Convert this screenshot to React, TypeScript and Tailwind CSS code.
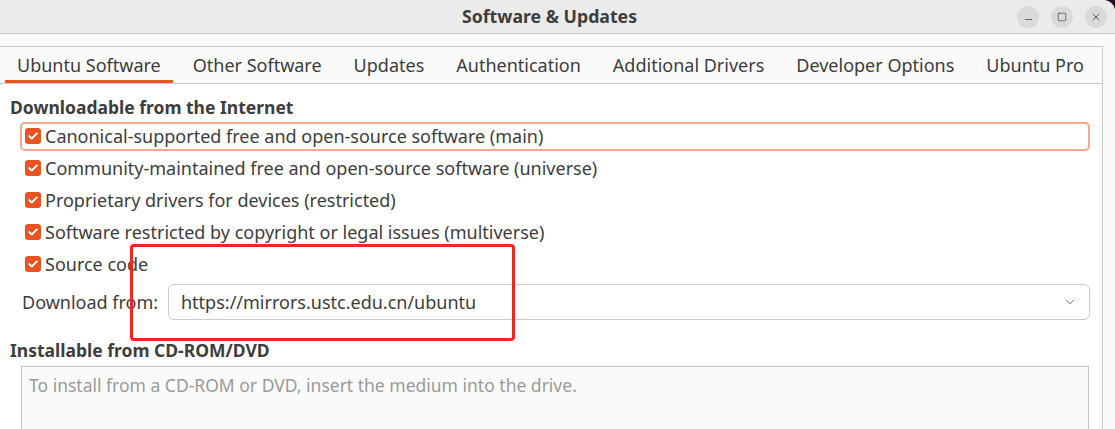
import { ChevronDown, Minus, Square, X } from "lucide-react"

const tabs = [
  "Ubuntu Software",
  "Other Software",
  "Updates",
  "Authentication",
  "Additional Drivers",
  "Developer Options",
  "Ubuntu Pro",
]

const sources = [
  "Canonical-supported free and open-source software (main)",
  "Community-maintained free and open-source software (universe)",
  "Proprietary drivers for devices (restricted)",
  "Software restricted by copyright or legal issues (multiverse)",
  "Source code",
]

function CheckBox() {
  return (
    <span className="w-[16px] h-[16px] rounded-[3px] bg-[#e95420] flex items-center justify-center flex-shrink-0">
      <svg width="10" height="8" viewBox="0 0 10 8" fill="none">
        <path d="M1.2 4 L3.8 6.5 L8.8 1.4" stroke="white" strokeWidth="1.8" strokeLinecap="round" strokeLinejoin="round" />
      </svg>
    </span>
  )
}

export default function App() {
  return (
    <div className="w-[1115px] h-[429px] bg-[#300a24] overflow-hidden">
      <div className="relative h-full bg-[#fafafa] rounded-tr-[12px] overflow-hidden font-['Noto_Sans',sans-serif] text-[#3d3d3d]">
        {/* header bar */}
        <div className="h-[34px] bg-[#ebebeb] border-b border-[#c8c8c8] grid grid-cols-[1fr_auto_1fr] items-center">
          <div />
          <h1 className="text-[17.7px] font-bold text-[#3d3d3d] pr-[16px]">Software &amp; Updates</h1>
          <div className="flex justify-end gap-[12px] pr-[8px]">
            <span className="w-[22px] h-[22px] rounded-full bg-[#dadada] flex items-center justify-center">
              <Minus className="w-[11px] h-[11px] mt-[5px]" strokeWidth={1.6} />
            </span>
            <span className="w-[22px] h-[22px] rounded-full bg-[#dadada] flex items-center justify-center">
              <Square className="w-[10px] h-[10px]" strokeWidth={1.6} />
            </span>
            <span className="w-[22px] h-[22px] rounded-full bg-[#dadada] flex items-center justify-center">
              <X className="w-[12px] h-[12px]" strokeWidth={1.6} />
            </span>
          </div>
        </div>

        {/* notebook */}
        <div className="pt-[12px] pr-[12px]">
          <div className="border-t border-r border-[#cdcdcd]">
            <div className="h-[37px] flex gap-2 pl-[5px] border-b border-[#cdcdcd] bg-[#fafafa]">
              {tabs.map((t, i) => (
                <div
                  key={t}
                  className={
                    i === 0
                      ? "px-[12px] flex items-center text-[18px] border-b-[3px] border-[#e95420] pt-[3px] whitespace-nowrap"
                      : "px-[12px] flex items-center text-[18px] whitespace-nowrap"
                  }
                >
                  {t}
                </div>
              ))}
            </div>

            <div className="bg-white h-[400px]">
              <h2 className="pt-[12px] pl-[10px] text-[17.5px] font-bold leading-[22px]">Downloadable from the Internet</h2>

              <div className="mt-[2px]">
                {sources.map((s, i) => (
                  <div key={s} className="h-[32px] flex items-center">
                    <div
                      className={
                        i === 0
                          ? "ml-[20px] mr-[12px] flex-1 h-[29px] border-2 border-[#f4a88c] rounded-[5px] flex items-center gap-[4px] pl-[3px]"
                          : "ml-[20px] mr-[12px] flex-1 h-[29px] border-2 border-transparent flex items-center gap-[4px] pl-[3px]"
                      }
                    >
                      <CheckBox />
                      <span className="text-[18px] whitespace-nowrap">{s}</span>
                    </div>
                  </div>
                ))}
              </div>

              <div className="mt-[4px] flex items-center pl-[22px] pr-[12px]">
                <span className="text-[18px] w-[146px] whitespace-nowrap">Download from:</span>
                <div className="flex-1 h-[36px] border border-[#cacaca] rounded-[6px] bg-white flex items-center justify-between pl-[12px] pr-[12px]">
                  <span className="text-[18px]">https://mirrors.ustc.edu.cn/ubuntu</span>
                  <ChevronDown className="w-[14px] h-[14px] text-[#555]" strokeWidth={1.5} />
                </div>
              </div>

              <h2 className="mt-[19px] pl-[10px] text-[17.5px] font-bold leading-[22px]">Installable from CD-ROM/DVD</h2>

              <div className="mt-[5px] ml-[21px] mr-[13px] h-[80px] border border-[#c4c4c4] bg-[#fafafa] pl-[7px] pt-[5px]">
                <span className="text-[17.5px] text-[#9a9a9a] whitespace-nowrap">To install from a CD-ROM or DVD, insert the medium into the drive.</span>
              </div>
            </div>
          </div>
        </div>

        {/* red annotation */}
        <div className="absolute left-[130px] top-[244px] w-[385px] h-[97px] border-[3px] border-[#f52424] rounded-[4px]" />
      </div>
    </div>
  )
}
